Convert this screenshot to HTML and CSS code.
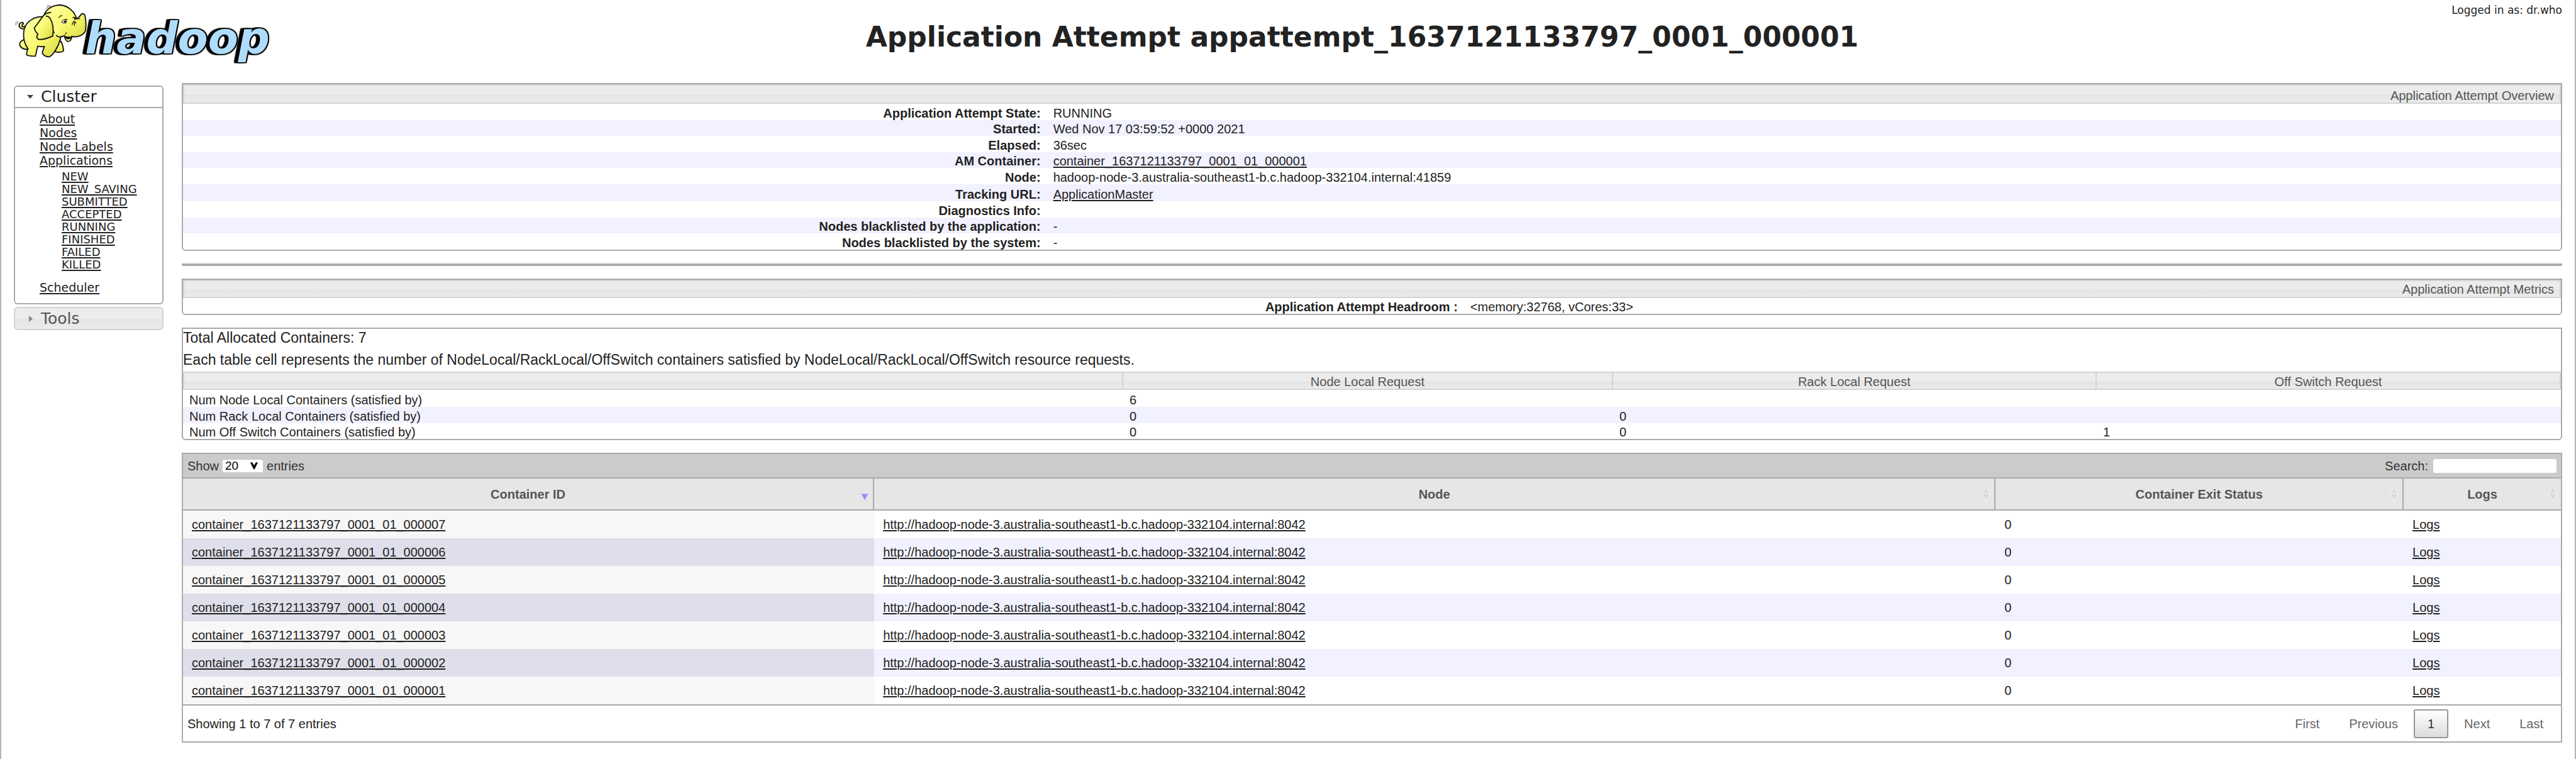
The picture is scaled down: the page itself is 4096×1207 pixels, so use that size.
FILE: index.html
```html
<!DOCTYPE html>
<html lang="en">
<head>
<meta charset="utf-8">
<title>Application Attempt appattempt_1637121133797_0001_000001</title>
<link rel="stylesheet" href="styles.css">
</head>
<body>
<header class="header">
  <a class="logo" href="#" aria-label="Hadoop">
    <svg viewBox="0 0 1500 390" class="logo-art" role="img" aria-label="hadoop">
      <defs>
        <linearGradient id="skin" x1="0" y1="0" x2="1" y2="1">
          <stop offset="0" stop-color="#ffffa8"/>
          <stop offset="0.5" stop-color="#fafa74"/>
          <stop offset="1" stop-color="#d6d63c"/>
        </linearGradient>
      </defs>
      <text class="word" x="444" y="280">hadoop</text>
      <g fill="url(#skin)" stroke="#111" stroke-width="6" stroke-linejoin="round" stroke-linecap="round">
        <path d="M122 150C104 152 94 134 104 122C112 114 122 116 122 124C118 128 112 130 114 136C118 142 126 140 130 136" />
        <path d="M122 208C110 212 100 224 103 236C110 250 126 258 142 258L150 225Z"/>
        <path d="M318 215C326 225 330 250 332 262C330 274 308 273 290 271L290 225Z"/>
        <path d="M215 86C165 90 130 120 124 165C120 200 130 232 146 254C140 270 138 280 139 286C150 292 170 293 184 293C192 275 190 255 198 240C206 244 220 244 232 242C228 256 220 268 221 278C228 290 244 298 258 296C276 288 306 244 316 200L300 120Z"/>
        <path d="M232 72C248 42 280 26 316 26C356 30 390 60 400 98C412 94 416 84 424 74C432 68 442 72 444 84C449 110 450 140 445 162C436 184 404 196 374 190C376 204 366 218 352 215C340 210 338 196 336 186C326 190 314 196 300 190L232 110Z"/>
        <path d="M272 66C240 62 226 80 214 98C200 120 186 134 179 146C182 162 192 172 198 178C188 190 190 202 206 206C232 206 262 194 275 188C280 160 278 124 262 96C256 88 250 84 242 84"/>
      </g>
      <path d="M278 58L304 100L302 180L284 184C286 150 282 118 264 92L262 68Z" fill="#fbfb86"/>
      <path d="M336 186C348 192 362 192 374 190C372 200 364 207 354 206C344 202 340 196 336 186Z" fill="#111"/>
      <path d="M348 207C354 202 362 204 366 208C360 214 352 214 348 207Z" fill="#fafa74"/>
      <g fill="none" stroke="#111" stroke-width="4" stroke-linecap="round">
        <path d="M308 92C310 84 318 80 324 82M322 116C328 104 340 98 350 102M380 92C388 88 394 90 398 98M376 128C380 120 382 116 384 112M388 134V112M396 122L392 112M404 98H416M340 178L348 170"/>
      </g>
      <ellipse cx="336" cy="112" rx="12" ry="9" fill="#fff" stroke="#111" stroke-width="3"/>
      <circle cx="339" cy="113" r="6" fill="#111"/>
      <circle cx="391" cy="98" r="5" fill="#111"/>
      <path d="M244 46L248 30L262 28M252 38L264 32M82 132L84 116L98 112M90 126L96 120" fill="none" stroke="#888" stroke-width="4"/>
    </svg>
  </a>
  <h1 class="title">Application Attempt appattempt_1637121133797_0001_000001</h1>
  <p class="user">Logged in as: dr.who</p>
</header>

<div class="layout">
  <nav class="nav">
    <h3 class="nav-head nav-head-open"><button type="button" aria-expanded="true"><svg class="tri" viewBox="0 0 10 10"><path d="M0 2H10L5 8Z"/></svg>Cluster</button></h3>
    <div class="nav-body">
      <ul class="nav-list">
        <li><a href="#">About</a></li>
        <li><a href="#">Nodes</a></li>
        <li><a href="#">Node Labels</a></li>
        <li><a href="#">Applications</a>
          <ul class="nav-sub">
            <li><a href="#">NEW</a></li>
            <li><a href="#">NEW_SAVING</a></li>
            <li><a href="#">SUBMITTED</a></li>
            <li><a href="#">ACCEPTED</a></li>
            <li><a href="#">RUNNING</a></li>
            <li><a href="#">FINISHED</a></li>
            <li><a href="#">FAILED</a></li>
            <li><a href="#">KILLED</a></li>
          </ul>
        </li>
        <li><a href="#">Scheduler</a></li>
      </ul>
    </div>
    <h3 class="nav-head nav-head-closed"><button type="button" aria-expanded="false"><svg class="tri" viewBox="0 0 10 10"><path d="M3 0V10L9 5Z"/></svg>Tools</button></h3>
  </nav>

  <main class="content">
    <table class="panel info overview">
      <thead><tr><th colspan="2">Application Attempt Overview</th></tr></thead>
      <tbody>
        <tr><th scope="row">Application Attempt State:</th><td>RUNNING</td></tr>
        <tr><th scope="row">Started:</th><td>Wed Nov 17 03:59:52 +0000 2021</td></tr>
        <tr><th scope="row">Elapsed:</th><td>36sec</td></tr>
        <tr><th scope="row">AM Container:</th><td><a href="#">container_1637121133797_0001_01_000001</a></td></tr>
        <tr><th scope="row">Node:</th><td>hadoop-node-3.australia-southeast1-b.c.hadoop-332104.internal:41859</td></tr>
        <tr class="tall"><th scope="row">Tracking URL:</th><td><a href="#">ApplicationMaster</a></td></tr>
        <tr><th scope="row">Diagnostics Info:</th><td></td></tr>
        <tr><th scope="row">Nodes blacklisted by the application:</th><td>-</td></tr>
        <tr><th scope="row">Nodes blacklisted by the system:</th><td>-</td></tr>
      </tbody>
    </table>

    <hr class="rule">

    <table class="panel info metrics">
      <thead><tr><th colspan="2">Application Attempt Metrics</th></tr></thead>
      <tbody>
        <tr><th scope="row">Application Attempt Headroom :</th><td>&lt;memory:32768, vCores:33&gt;</td></tr>
      </tbody>
    </table>

    <section class="panel locality">
      <p>Total Allocated Containers: 7</p>
      <p>Each table cell represents the number of NodeLocal/RackLocal/OffSwitch containers satisfied by NodeLocal/RackLocal/OffSwitch resource requests.</p>
      <table class="requests">
        <colgroup><col class="req-name"><col class="req-node"><col class="req-rack"><col></colgroup>
        <thead><tr><th></th><th>Node Local Request</th><th>Rack Local Request</th><th>Off Switch Request</th></tr></thead>
        <tbody>
          <tr><td>Num Node Local Containers (satisfied by)</td><td>6</td><td></td><td></td></tr>
          <tr><td>Num Rack Local Containers (satisfied by)</td><td>0</td><td>0</td><td></td></tr>
          <tr><td>Num Off Switch Containers (satisfied by)</td><td>0</td><td>0</td><td>1</td></tr>
        </tbody>
      </table>
    </section>

    <section class="containers">
      <div class="toolbar">
        <div class="length">
          <label for="len">Show</label>
          <span class="select-wrap">
            <select id="len"><option>20</option><option>40</option><option>60</option></select>
            <svg class="chevron" viewBox="0 0 18 16"><path d="M1 1L5 0L9 7L13 0L17 1L10 15H8Z"/></svg>
          </span>
          <span>entries</span>
        </div>
        <div class="search"><label for="q">Search:</label><input id="q" type="text"></div>
      </div>
      <table class="data">
        <colgroup><col class="c-id"><col class="c-node"><col class="c-exit"><col></colgroup>
        <thead>
          <tr>
            <th>Container ID<svg class="sort sort-desc" viewBox="0 0 14 24"><path d="M1 12H13L7 23Z"/></svg></th>
            <th>Node<svg class="sort" viewBox="0 0 14 24"><path d="M1 12L7 1L13 12L7 23ZM1 12H13"/></svg></th>
            <th>Container Exit Status<svg class="sort" viewBox="0 0 14 24"><path d="M1 12L7 1L13 12L7 23ZM1 12H13"/></svg></th>
            <th>Logs<svg class="sort" viewBox="0 0 14 24"><path d="M1 12L7 1L13 12L7 23ZM1 12H13"/></svg></th>
          </tr>
        </thead>
        <tbody>
          <tr><td><a href="#">container_1637121133797_0001_01_000007</a></td><td><a href="#">http://hadoop-node-3.australia-southeast1-b.c.hadoop-332104.internal:8042</a></td><td>0</td><td><a href="#">Logs</a></td></tr>
          <tr><td><a href="#">container_1637121133797_0001_01_000006</a></td><td><a href="#">http://hadoop-node-3.australia-southeast1-b.c.hadoop-332104.internal:8042</a></td><td>0</td><td><a href="#">Logs</a></td></tr>
          <tr><td><a href="#">container_1637121133797_0001_01_000005</a></td><td><a href="#">http://hadoop-node-3.australia-southeast1-b.c.hadoop-332104.internal:8042</a></td><td>0</td><td><a href="#">Logs</a></td></tr>
          <tr><td><a href="#">container_1637121133797_0001_01_000004</a></td><td><a href="#">http://hadoop-node-3.australia-southeast1-b.c.hadoop-332104.internal:8042</a></td><td>0</td><td><a href="#">Logs</a></td></tr>
          <tr><td><a href="#">container_1637121133797_0001_01_000003</a></td><td><a href="#">http://hadoop-node-3.australia-southeast1-b.c.hadoop-332104.internal:8042</a></td><td>0</td><td><a href="#">Logs</a></td></tr>
          <tr><td><a href="#">container_1637121133797_0001_01_000002</a></td><td><a href="#">http://hadoop-node-3.australia-southeast1-b.c.hadoop-332104.internal:8042</a></td><td>0</td><td><a href="#">Logs</a></td></tr>
          <tr><td><a href="#">container_1637121133797_0001_01_000001</a></td><td><a href="#">http://hadoop-node-3.australia-southeast1-b.c.hadoop-332104.internal:8042</a></td><td>0</td><td><a href="#">Logs</a></td></tr>
        </tbody>
      </table>
      <div class="footer">
        <span>Showing 1 to 7 of 7 entries</span>
        <div class="pages">
          <button type="button">First</button>
          <button type="button">Previous</button>
          <button type="button" class="current">1</button>
          <button type="button">Next</button>
          <button type="button">Last</button>
        </div>
      </div>
    </section>
  </main>
</div>
</body>
</html>
```
FILE: styles.css
```css
* {
  box-sizing: border-box;
}

body {
  margin: 0;
  min-height: 100vh;
  border: solid #b4b4b4;
  border-width: 0 2px;
  background: #fff;
  color: #222;
  font: 20px/22px "Liberation Sans", Arial, sans-serif;
}

h1, h3, p, ul {
  margin: 0;
  padding: 0;
}

a {
  color: inherit;
  text-decoration-thickness: 2px;
  text-underline-offset: 2px;
}

button, input, select {
  margin: 0;
  font: inherit;
  color: inherit;
}

/* Header */
.header {
  display: grid;
  grid-template-columns: 455px 1fr 219px;
  height: 132px;
}

.logo {
  margin-left: -2px;
}

.logo-art {
  display: block;
  width: 457px;
  height: 119px;
}

.word {
  font: italic bold 230px "DejaVu Sans", Verdana, sans-serif;
  fill: #b0dcfb;
  filter: drop-shadow(5px 0 0 #000) drop-shadow(-5px 0 0 #000) drop-shadow(0 5px 0 #000) drop-shadow(0 -5px 0 #000) drop-shadow(-14px 0 0 #000);
}

.title {
  padding-top: 33px;
  font: bold 44px/52px "DejaVu Sans", Verdana, sans-serif;
  text-align: center;
  white-space: nowrap;
}

.user {
  padding: 6px 20px 0 0;
  font: 17px/20px "DejaVu Sans", Verdana, sans-serif;
  text-align: right;
  white-space: nowrap;
}

/* Page columns */
.layout {
  display: grid;
  grid-template-columns: 238px minmax(0, 1fr);
  gap: 29px;
  align-items: start;
  padding: 0 20px 26px;
}

/* Sidebar */
.nav {
  padding-top: 4px;
  font-family: "DejaVu Sans", Verdana, sans-serif;
}

.nav-head {
  font: 25px/32px "DejaVu Sans", Verdana, sans-serif;
}

.nav-head button {
  display: flex;
  align-items: center;
  gap: 12px;
  width: 100%;
  padding: 0 0 0 19px;
  border: 2px solid #aaa;
  background: #fff;
  text-align: left;
}

.nav-head-open button {
  border-radius: 6px 6px 0 0;
}

.nav-head-closed button {
  margin-top: 4px;
  border-color: #d3d3d3;
  border-radius: 6px;
  background: linear-gradient(#ececec 50%, #e4e4e4 55%, #ececec);
  color: #555;
  line-height: 33px;
}

.tri {
  width: 10px;
  height: 10px;
  fill: #444;
}

.nav-head-closed .tri {
  fill: #888;
}

.nav-body {
  padding: 6px 0 14px 39px;
  border: solid #aaa;
  border-width: 0 2px 2px;
  border-radius: 0 0 6px 6px;
}

.nav-list {
  list-style: none;
  font-size: 19px;
  line-height: 22px;
}

.nav-sub {
  margin: 5px 0 15px 35px;
  list-style: none;
  font-size: 18px;
  line-height: 20px;
}

/* Panels */
.content {
  display: flex;
  flex-direction: column;
  gap: 20px;
}

.panel {
  border: 2px solid #aaa;
  border-radius: 0 0 6px 6px;
}

table {
  width: 100%;
  border-spacing: 0;
  table-layout: fixed;
}

th, td {
  padding: 4px 10px 0;
  text-align: left;
}

.info thead th, .requests thead th {
  border: 2px solid #d3d3d3;
  background: linear-gradient(#ececec 50%, #e4e4e4 55%, #ececec);
  color: #555;
  font-weight: normal;
}

.info thead th {
  padding: 2px 9px 0;
  line-height: 23px;
  text-align: right;
}

.overview thead th {
  padding-top: 5px;
  line-height: 22px;
}

.info tbody th {
  text-align: right;
}

.info tbody tr, .requests tbody tr {
  height: 26px;
}

.info tbody tr:nth-child(even) {
  height: 25px;
  background: #f1f1ff;
  line-height: 21px;
}

.info tbody tr.tall {
  height: 27px;
}

.info tbody tr.tall > * {
  padding-top: 6px;
}

.overview, .metrics {
  table-layout: auto;
}

.overview tbody th {
  width: 36.33%;
}

.metrics tbody th {
  width: 53.87%;
}

.metrics tbody tr {
  height: 25px;
  line-height: 21px;
}

.rule {
  width: 100%;
  height: 4px;
  margin: 0;
  border: 0;
  border-radius: 0 0 2px 2px;
  background: #aaa;
}

/* Locality summary */
.locality {
  padding-top: 1px;
}

.locality p {
  margin-bottom: 9px;
  font-size: 23px;
  line-height: 26px;
}

.locality p + p {
  margin-bottom: 6px;
}

.req-name { width: 39.54%; }
.req-node { width: 20.6%; }
.req-rack { width: 20.34%; }

.requests thead th {
  height: 29px;
  padding-top: 3px;
  border-left-width: 0;
  line-height: 22px;
  text-align: center;
}

.requests thead th:first-child {
  border-left-width: 2px;
}

.requests tbody tr:nth-child(even) {
  background: #f1f1ff;
}

.requests tbody tr:first-child td {
  padding-top: 5px;
}

.requests tbody tr:last-child {
  height: 25px;
  line-height: 21px;
}

/* Containers table */
.containers {
  border: 2px solid #aaa;
}

.toolbar, .length, .search, .footer, .pages {
  display: flex;
  align-items: center;
}

.toolbar {
  justify-content: space-between;
  height: 37px;
  padding: 0 7px;
  background: #cbcbcb;
  color: #333;
}

.length {
  gap: 6px;
}

.search {
  gap: 8px;
}

.select-wrap {
  position: relative;
  display: flex;
}

.length select {
  width: 64px;
  height: 20px;
  padding: 0 4px;
  border: 0;
  border-radius: 3px;
  appearance: none;
  background: #fff;
  color: #000;
  font-size: 19px;
  line-height: 20px;
}

.chevron {
  position: absolute;
  top: 4px;
  right: 6px;
  width: 16px;
  height: 12px;
  pointer-events: none;
}

.search input {
  width: 196px;
  height: 22px;
  padding: 0 4px;
  border: 0;
  border-radius: 3px;
  background: #fff;
}

.c-id { width: 29.07%; }
.c-node { width: 47.16%; }
.c-exit { width: 17.16%; }

.data thead th {
  position: relative;
  height: 53px;
  padding: 0 10px;
  border: solid #aaa;
  border-width: 2px 2px 2px 0;
  background: #e6e6e6;
  color: #555;
  text-align: center;
}

.data thead th:last-child {
  border-right: 0;
}

.sort {
  position: absolute;
  top: 12px;
  right: 6px;
  width: 14px;
  height: 24px;
  fill: #dadada;
  stroke: #f6f6f6;
  stroke-width: 1px;
}

.sort-desc {
  fill: #8f8ffa;
  stroke: #d8d8f4;
}

.data td {
  height: 44px;
  padding: 0 14px;
}

.data td:first-child {
  background: #f7f7f7;
}

.data tbody tr:nth-child(even) {
  background: #f1f1ff;
}

.data tbody tr:nth-child(even) td:first-child {
  background: #dfdfeb;
}

.footer {
  justify-content: space-between;
  height: 59px;
  padding: 0 6px 0 7px;
  border-top: 2px solid #aaa;
}

.pages {
  gap: 3px;
}

.pages button {
  height: 46px;
  padding: 0 20px;
  border: 2px solid transparent;
  border-radius: 3px;
  background: none;
  color: #666;
}

.pages .current {
  border-color: #979797;
  background: linear-gradient(#fff, #dcdcdc);
  color: #333;
}
```
